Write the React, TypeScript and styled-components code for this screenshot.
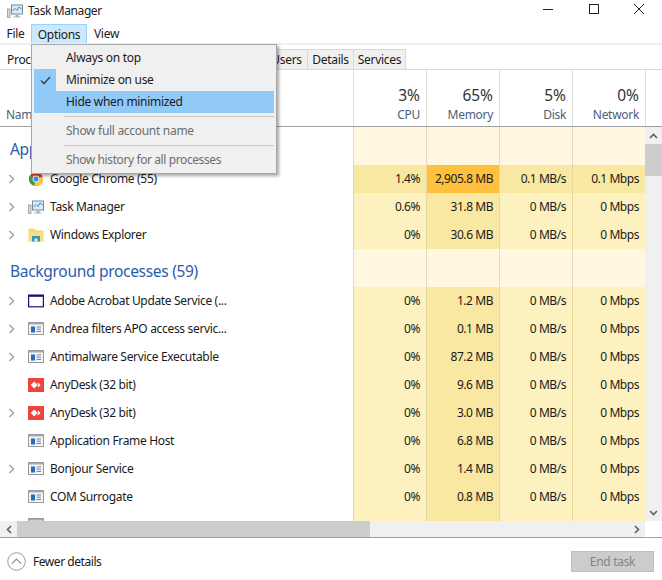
import React from "react";
import styled, { createGlobalStyle } from "styled-components";

const Global = createGlobalStyle`
  html, body { margin: 0; padding: 0; background: #fff; }
  body { font-family: "Noto Sans", "Open Sans", sans-serif; font-size: 12px; color: #1a1a1a; letter-spacing: -0.3px; }
  * { box-sizing: border-box; }
`;

const Windowed = styled.div`
  position: relative; width: 662px; height: 580px; overflow: hidden; background: #fff;
  display: flex; flex-direction: column;
`;
const TitleBar = styled.div`
  height: 22px; flex: none; display: flex; align-items: center; padding-left: 7px; gap: 5px;
`;
const TitleText = styled.span`font-size: 12px; color: #1c1c1c; padding-bottom: 2px; letter-spacing: -0.4px;`;
const WindowButtons = styled.div`
  margin-left: auto; margin-right: 0; align-self: flex-start; display: flex; align-items: center; height: 18px;
`;
const WinBtn = styled.div`
  width: 45.5px; height: 18px; display: flex; align-items: center; justify-content: center;
`;
const MenuBar = styled.div`
  height: 21px; flex: none; display: flex; align-items: flex-end;
`;
const MenuItem = styled.div<{ $open?: boolean; $w: number }>`
  width: ${p => p.$w}px; height: 19px; display: flex; align-items: center; justify-content: center;
  font-size: 12px; color: #1a1a1a;
  ${p => (p.$open ? "background:#cce8ff;border:1px solid #99d1ff;border-bottom:none;" : "")}
`;
const TabStrip = styled.div`
  height: 27px; flex: none; border-top: 2px solid #f0f0f0; border-bottom: 1px solid #d9d9d9;
  display: flex; align-items: flex-end;
`;
const ActiveTab = styled.div`
  width: 64px; height: 20px; display: flex; align-items: center; padding-left: 7px; font-size: 12px;
  white-space: nowrap; flex: none;
`;
const Tab = styled.div<{ $w: number }>`
  width: ${p => p.$w}px; height: 20px; flex: none; display: flex; align-items: center; justify-content: center;
  background: #f0f0f0; border: 1px solid #d9d9d9; border-bottom: none; margin-right: -1px; font-size: 12px; color: #1a1a1a;
`;
const Grid = styled.div`
  display: grid; grid-template-columns: 353px repeat(4, 73px) 1fr;
`;
const HeaderRow = styled(Grid)`
  height: 57px; flex: none; border-bottom: 1px solid #a0a0a0;
`;
const NameHead = styled.div`
  display: flex; align-items: flex-end; padding: 0 0 3px 6px; font-size: 12px; color: #4c607a;
`;
const ColHead = styled.div`
  border-left: 1px solid #dedede; display: flex; flex-direction: column; align-items: flex-end;
  justify-content: flex-end; padding: 0 6px 2px 0;
`;
const Pct = styled.div`font-size: 15.5px; line-height: 21px; color: #333; letter-spacing: 0;`;
const ColLabel = styled.div`font-size: 12px; line-height: 18px; color: #4c607a;`;
const TableArea = styled.div`display: flex; height: 394px; flex: none;`;
const Rows = styled.div`width: 645px; height: 394px; overflow: hidden;`;
const GroupRow = styled(Grid)`height: 38px; grid-template-columns: 353px repeat(4, 73px);`;
const GroupName = styled.div`
  font-size: 15.5px; color: #2a5cab; padding: 11px 0 0 10px; white-space: nowrap;
`;
const GroupCell = styled.div`background: #fff7e0; border-left: 1px solid #e6dcb8;`;
const DataRow = styled(Grid)`height: 28px; grid-template-columns: 353px repeat(4, 73px);`;
const NameCell = styled.div`display: flex; align-items: center; height: 28px; white-space: nowrap;`;
const Chevron = styled.div`width: 28px; padding-left: 8px; display: flex; align-items: center; flex: none;`;
const IconWrap = styled.div`width: 22px; display: flex; align-items: center; flex: none; height: 16px;`;
const RowName = styled.span`font-size: 12px; color: #1a1a1a; padding-bottom: 1px; letter-spacing: -0.33px;`;
const Cell = styled.div<{ $bg: string }>`
  background: ${p => p.$bg}; border-left: 1px solid #e6d8a0;
  display: flex; align-items: center; justify-content: flex-end; padding: 0 6px 1px 0; font-size: 12px;
  color: #1a1a1a; letter-spacing: -0.45px;
`;
const VScroll = styled.div`
  width: 17px; height: 394px; background: #f0f0f0; display: flex; flex-direction: column; align-items: center;
`;
const Arrow = styled.div`
  height: 17px; width: 17px; display: flex; align-items: center; justify-content: center; flex: none;
`;
const VThumb = styled.div`width: 17px; height: 32px; background: #cdcdcd;`;
const Spacer = styled.div`flex: 1;`;
const HScrollRow = styled.div`
  height: 17px; flex: none; border-bottom: 1px solid #a0a0a0; display: flex; background: #fff;
`;
const HTrack = styled.div`
  width: 645px; height: 16px; background: #f0f0f0; display: flex; align-items: stretch;
`;
const HThumb = styled.div`width: 353px; background: #cdcdcd;`;
const Footer = styled.div`
  flex: 1; display: flex; align-items: center; justify-content: space-between; padding: 4px 8px 0 7px;
`;
const Fewer = styled.div`display: flex; align-items: center; gap: 7px; font-size: 12px; color: #1a1a1a; letter-spacing: -0.45px;`;
const EndTask = styled.div`
  width: 83px; height: 21px; background: #cccccc; border: 1px solid #bfbfbf; color: #838383;
  display: flex; align-items: center; justify-content: center; font-size: 12px;
`;
const Menu = styled.div`
  position: absolute; left: 31px; top: 44px; width: 246px; height: 130px; background: #f0f0f0;
  border: 1px solid #a8a8a8; box-shadow: 2px 2px 3px rgba(0,0,0,.35);
  padding: 2px; display: flex; flex-direction: column;
`;
const MenuRow = styled.div<{ $hl?: boolean; $dis?: boolean; $tight?: boolean }>`
  height: 22px; flex: none; display: flex; align-items: center; padding: 0 0 1px 32px; position: relative;
  font-size: 12px; color: ${p => (p.$dis ? "#6d6d6d" : "#1a1a1a")};
  background: ${p => (p.$hl ? "#91c9f7" : "transparent")};
  ${p => (p.$tight ? "letter-spacing:-0.4px;" : "")}
`;
const CheckBox = styled.div`
  position: absolute; left: 0; top: 0; width: 22px; height: 22px; background: #91c9f7;
  display: flex; align-items: center; justify-content: center;
`;
const MenuSep = styled.div`height: 7px; flex: none; display: flex; align-items: center; padding-left: 30px;
  &::after { content: ""; display: block; height: 1px; width: 100%; background: #c8c8c8; }
`;

const Chev = () => (
  <svg width="8" height="10" viewBox="0 0 8 10"><path d="M1.5 1 L5.5 5 L1.5 9" fill="none" stroke="#a6a6a6" strokeWidth="1.6" /></svg>
);
const TMIcon = () => (
  <svg width="16" height="16" viewBox="0 0 16 16">
    <rect x="0.5" y="6" width="2.5" height="8.5" fill="#dcdcdc" stroke="#8a8a8a" strokeWidth=".7" />
    <rect x="4.5" y="2" width="11" height="9" fill="#d8ecf8" stroke="#7d8a94" />
    <path d="M5.5 8 L8 5.5 L10 7.5 L12 4 L14.5 6" fill="none" stroke="#3c78b0" strokeWidth=".9" />
    <path d="M8.5 11.5h3v2h2v1h-7v-1h2z" fill="#b0b0b0" />
  </svg>
);
const ChromeIcon = () => (
  <svg width="16" height="16" viewBox="0 0 16 16">
    <circle cx="8" cy="8" r="7" fill="#de4437" />
    <path d="M8 8 L2 4.4 A7 7 0 0 0 6.2 14.8 Z" fill="#3a9b4a" />
    <path d="M8 8 L14.5 5.4 A7 7 0 0 1 6.2 14.8 Z" fill="#f7c633" />
    <circle cx="8" cy="8" r="3.4" fill="#fff" />
    <circle cx="8" cy="8" r="2.6" fill="#4a8af0" />
  </svg>
);
const ExplorerIcon = () => (
  <svg width="16" height="16" viewBox="0 0 16 16">
    <path d="M0.5 1.5h6l1.5 2h7.5v3H.5z" fill="#f2d77a" />
    <rect x=".5" y="5" width="15" height="9.5" fill="#f9dc85" />
    <rect x="4" y="9" width="8" height="5.5" fill="#2f97b8" />
    <rect x="6.5" y="11.5" width="3" height="3" fill="#f9e8b0" />
  </svg>
);
const AdobeIcon = () => (
  <svg width="16" height="14" viewBox="0 0 16 14">
    <rect x=".6" y="1.2" width="14.8" height="11.6" fill="#fff" stroke="#14146e" strokeWidth="1.2" />
    <rect x="1" y=".8" width="14" height="2" fill="#14146e" />
  </svg>
);
const ServiceIcon = () => (
  <svg width="16" height="14" viewBox="0 0 16 14">
    <rect x=".5" y=".5" width="15" height="12" fill="#f2f6fa" stroke="#9a9a9a" />
    <rect x="1" y="1" width="14" height="1.5" fill="#a8a8a8" />
    <rect x="3" y="4.5" width="4" height="6" fill="#1f70c1" />
    <path d="M8.5 5h4.5M8.5 7.2h4.5M8.5 9.5h4.5" stroke="#7d7d7d" strokeWidth="1" />
  </svg>
);
const AnyDeskIcon = () => (
  <svg width="16" height="14" viewBox="0 0 16 14">
    <rect width="16" height="14" fill="#ef443b" />
    <path d="M6.2 3.6 L9.6 7 L6.2 10.4 L2.8 7 Z" fill="#fff" />
    <path d="M10.2 4.8 L12.6 7 L10.2 9.2 L9.3 8.3 L10.4 7 L9.3 5.7 Z" fill="#fff" />
  </svg>
);
const Scroll = ({ d }: { d: string }) => (
  <svg width="9" height="6" viewBox="0 0 9 6"><path d={d} fill="none" stroke="#5f5f5f" strokeWidth="1.6" /></svg>
);
const ScrollH = ({ d }: { d: string }) => (
  <svg width="6" height="9" viewBox="0 0 6 9"><path d={d} fill="none" stroke="#5f5f5f" strokeWidth="1.6" /></svg>
);

type Row = { icon: React.ReactNode; name: string; chev: boolean; v: string[]; bg: string[] };
const base = ["#fdf1bf", "#f9e8a2", "#fdf1bf", "#fdf1bf"];
const rowsA: Row[] = [
  { icon: <ChromeIcon />, name: "Google Chrome (55)", chev: true, v: ["1.4%", "2,905.8 MB", "0.1 MB/s", "0.1 Mbps"], bg: ["#f9e8a2", "#ffc13d", "#f9e8a2", "#f9e8a2"] },
  { icon: <TMIcon />, name: "Task Manager", chev: true, v: ["0.6%", "31.8 MB", "0 MB/s", "0 Mbps"], bg: base },
  { icon: <ExplorerIcon />, name: "Windows Explorer", chev: true, v: ["0%", "30.6 MB", "0 MB/s", "0 Mbps"], bg: base },
];
const mk = (icon: React.ReactNode, name: string, chev: boolean, mem: string): Row => ({ icon, name, chev, v: ["0%", mem, "0 MB/s", "0 Mbps"], bg: base });
const rowsB: Row[] = [
  mk(<AdobeIcon />, "Adobe Acrobat Update Service (...", true, "1.2 MB"),
  mk(<ServiceIcon />, "Andrea filters APO access servic...", true, "0.1 MB"),
  mk(<ServiceIcon />, "Antimalware Service Executable", true, "87.2 MB"),
  mk(<AnyDeskIcon />, "AnyDesk (32 bit)", false, "9.6 MB"),
  mk(<AnyDeskIcon />, "AnyDesk (32 bit)", true, "3.0 MB"),
  mk(<ServiceIcon />, "Application Frame Host", false, "6.8 MB"),
  mk(<ServiceIcon />, "Bonjour Service", true, "1.4 MB"),
  mk(<ServiceIcon />, "COM Surrogate", false, "0.8 MB"),
];
const cutRow: Row = { icon: <ServiceIcon />, name: "", chev: false, v: ["", "", "", ""], bg: base };

const RowView = ({ r }: { r: Row }) => (
  <DataRow>
    <NameCell>
      <Chevron>{r.chev && <Chev />}</Chevron>
      <IconWrap>{r.icon}</IconWrap>
      <RowName>{r.name}</RowName>
    </NameCell>
    {r.v.map((x, i) => <Cell key={i} $bg={r.bg[i]}>{x}</Cell>)}
  </DataRow>
);
const Group = ({ name }: { name: string }) => (
  <GroupRow>
    <GroupName>{name}</GroupName>
    <GroupCell /><GroupCell /><GroupCell /><GroupCell />
  </GroupRow>
);

export default function App() {
  return (
    <Windowed>
      <Global />
      <TitleBar>
        <TMIcon />
        <TitleText>Task Manager</TitleText>
        <WindowButtons>
          <WinBtn><svg width="10" height="10" viewBox="0 0 10 10"><path d="M0 5.5h10" stroke="#222" strokeWidth="1" /></svg></WinBtn>
          <WinBtn><svg width="10" height="10" viewBox="0 0 10 10"><rect x=".5" y=".5" width="9" height="9" fill="none" stroke="#222" /></svg></WinBtn>
          <WinBtn><svg width="10" height="10" viewBox="0 0 10 10"><path d="M0 0L10 10M10 0L0 10" stroke="#222" strokeWidth="1" /></svg></WinBtn>
        </WindowButtons>
      </TitleBar>
      <MenuBar>
        <MenuItem $w={31}>File</MenuItem>
        <MenuItem $w={56} $open>Options</MenuItem>
        <MenuItem $w={39}>View</MenuItem>
      </MenuBar>
      <TabStrip>
        <ActiveTab>Processes</ActiveTab>
        <Tab $w={84} />
        <Tab $w={73} />
        <Tab $w={47} />
        <Tab $w={43}>Users</Tab>
        <Tab $w={47}>Details</Tab>
        <Tab $w={53}>Services</Tab>
      </TabStrip>
      <HeaderRow>
        <NameHead>Name</NameHead>
        <ColHead><Pct>3%</Pct><ColLabel>CPU</ColLabel></ColHead>
        <ColHead><Pct>65%</Pct><ColLabel>Memory</ColLabel></ColHead>
        <ColHead><Pct>5%</Pct><ColLabel>Disk</ColLabel></ColHead>
        <ColHead><Pct>0%</Pct><ColLabel>Network</ColLabel></ColHead>
        <ColHead />
      </HeaderRow>
      <TableArea>
        <Rows>
          <Group name="Apps (3)" />
          {rowsA.map((r, i) => <RowView key={i} r={r} />)}
          <Group name="Background processes (59)" />
          {rowsB.map((r, i) => <RowView key={i} r={r} />)}
          <RowView r={cutRow} />
        </Rows>
        <VScroll>
          <Arrow><Scroll d="M1 5L4.5 1.5L8 5" /></Arrow>
          <VThumb />
          <Spacer />
          <Arrow><Scroll d="M1 1L4.5 4.5L8 1" /></Arrow>
        </VScroll>
      </TableArea>
      <HScrollRow>
        <HTrack>
          <Arrow><ScrollH d="M5 1L1.5 4.5L5 8" /></Arrow>
          <HThumb />
          <Spacer />
          <Arrow><ScrollH d="M1 1L4.5 4.5L1 8" /></Arrow>
        </HTrack>
      </HScrollRow>
      <Footer>
        <Fewer>
          <svg width="19" height="19" viewBox="0 0 19 19"><circle cx="9.5" cy="9.5" r="8.8" fill="#fff" stroke="#9a9a9a" /><path d="M5 11.5L9.5 7L14 11.5" fill="none" stroke="#9a9a9a" strokeWidth="1.2" /></svg>
          Fewer details
        </Fewer>
        <EndTask>End task</EndTask>
      </Footer>
      <Menu>
        <MenuRow>Always on top</MenuRow>
        <MenuRow><CheckBox><svg width="11" height="9" viewBox="0 0 11 9"><path d="M1 4.5L4 7.5L10 1" fill="none" stroke="#3a4a5c" strokeWidth="1.6" /></svg></CheckBox>Minimize on use</MenuRow>
        <MenuRow $hl>Hide when minimized</MenuRow>
        <MenuSep />
        <MenuRow $dis>Show full account name</MenuRow>
        <MenuSep />
        <MenuRow $dis $tight>Show history for all processes</MenuRow>
      </Menu>
    </Windowed>
  );
}
